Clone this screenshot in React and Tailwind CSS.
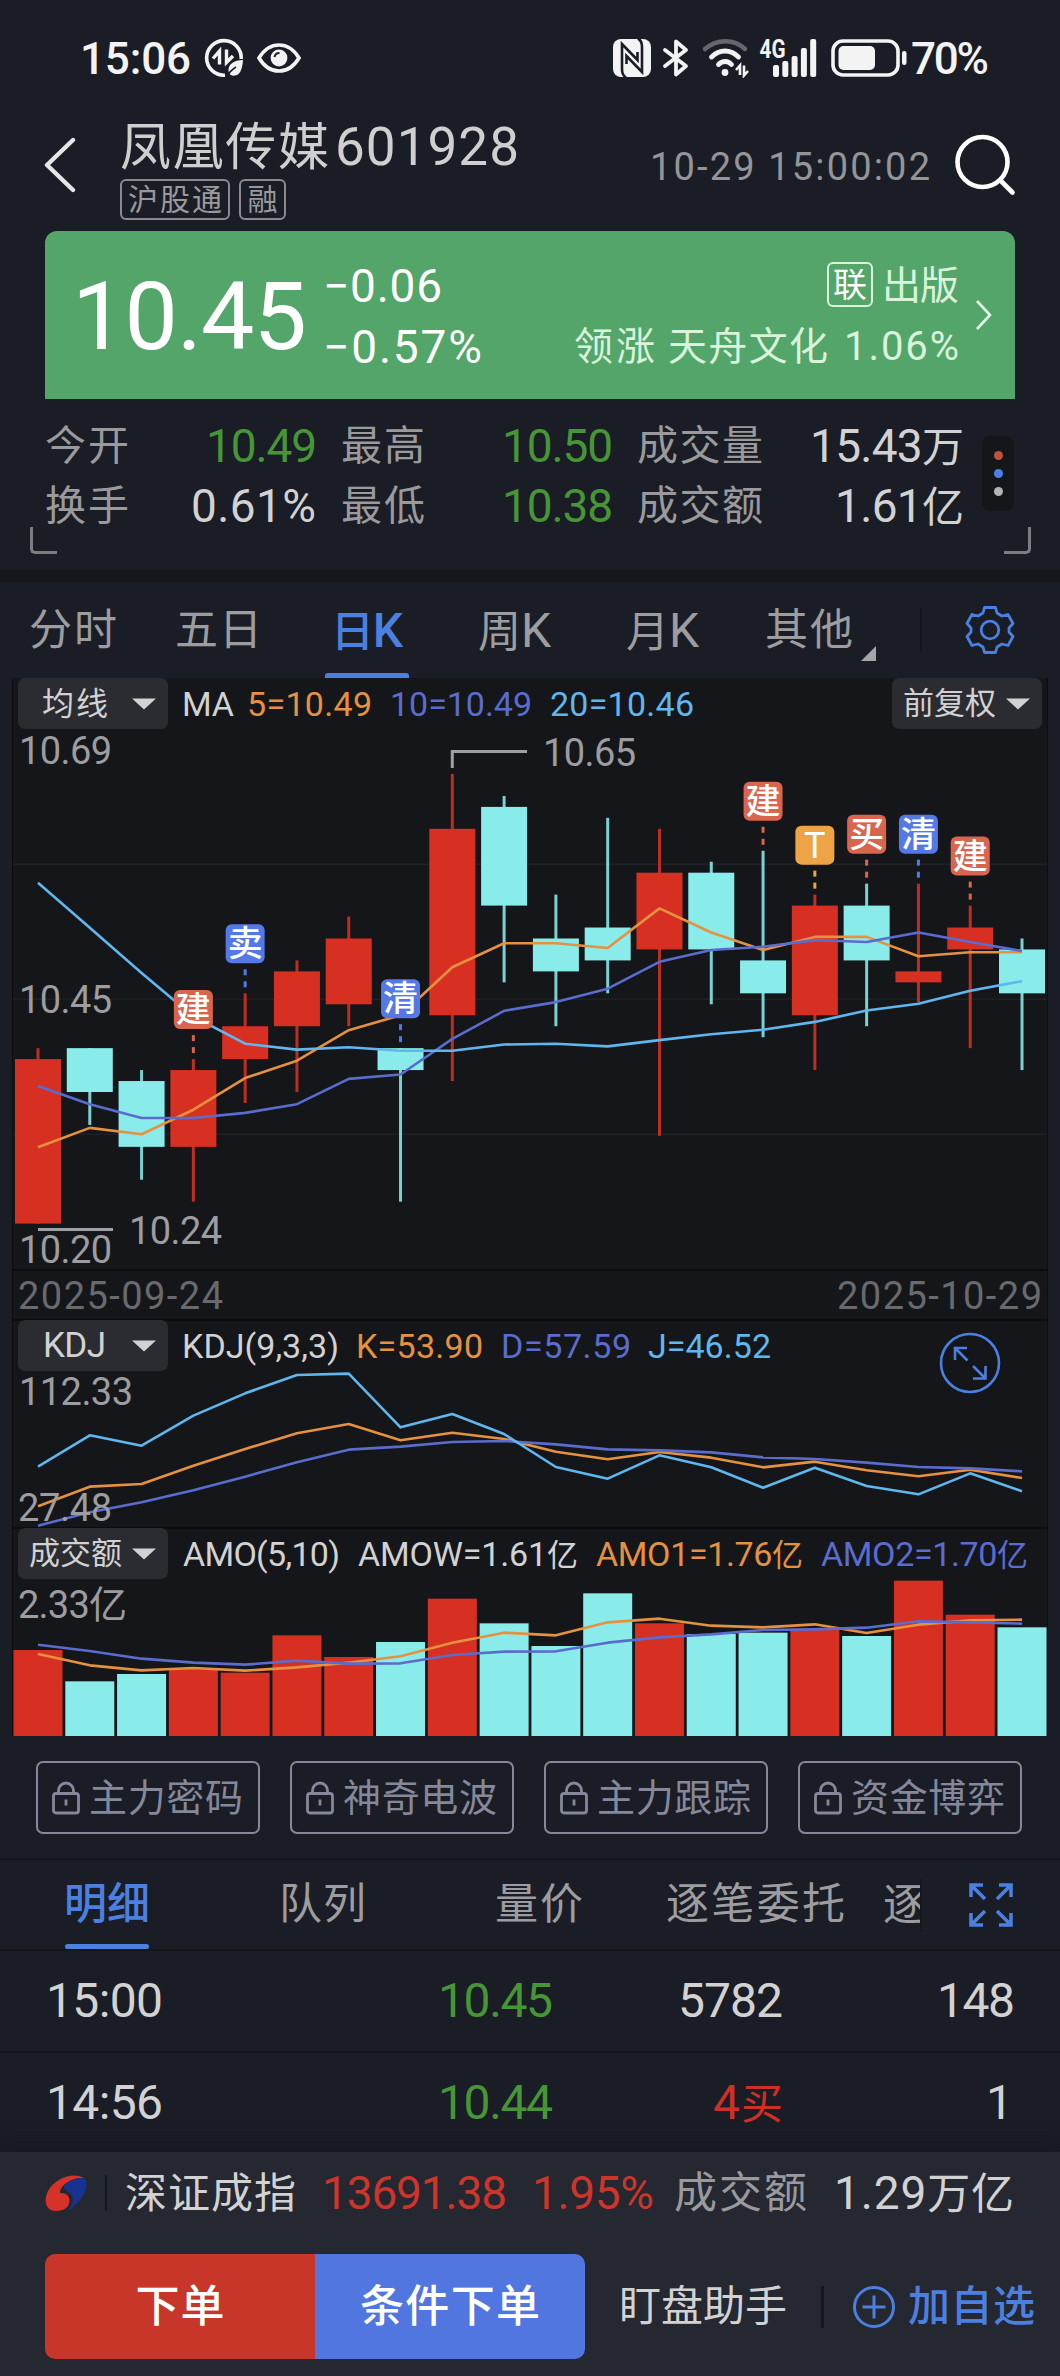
import React, { useLayoutEffect, useRef } from "react";

/* Text spread evenly over the width of its own box. */
function Fit({ className = "", children }) {
  const box = useRef(null);
  const inner = useRef(null);
  useLayoutEffect(() => {
    const span = inner.current;
    span.style.letterSpacing = "0px";
    const n = Math.max(1, span.textContent.length - 1);
    const room = box.current.clientWidth - span.getBoundingClientRect().width;
    span.style.letterSpacing = `${room / n}px`;
  }, [children]);
  return (
    <div ref={box} className={`shrink-0 whitespace-nowrap leading-none ${className}`}>
      <span ref={inner}>{children}</span>
    </div>
  );
}

const RED = "#d73022";
const CYAN = "#8aecea";
const ORANGE = "#e6913f";
const PURPLE = "#5a6cce";
const SKY = "#5fb7ee";

const X = (i) => 38 + i * 51.79;
const Y = (p) => 774 + (10.65 - p) * 1096.6;

/* high, body top, body bottom, low, rising */
const candles = [
  [10.4, 10.39, 10.24, 10.24, 1],
  [10.4, 10.4, 10.36, 10.33, 0],
  [10.38, 10.37, 10.31, 10.28, 0],
  [10.39, 10.38, 10.31, 10.26, 1],
  [10.45, 10.42, 10.39, 10.35, 1],
  [10.48, 10.47, 10.42, 10.36, 1],
  [10.52, 10.5, 10.44, 10.42, 1],
  [10.4, 10.4, 10.38, 10.26, 0],
  [10.65, 10.6, 10.43, 10.37, 1],
  [10.63, 10.62, 10.53, 10.46, 0],
  [10.54, 10.5, 10.47, 10.42, 0],
  [10.61, 10.51, 10.48, 10.45, 0],
  [10.6, 10.56, 10.49, 10.32, 1],
  [10.57, 10.56, 10.49, 10.44, 0],
  [10.58, 10.48, 10.45, 10.41, 0],
  [10.54, 10.53, 10.43, 10.38, 1],
  [10.55, 10.53, 10.48, 10.42, 0],
  [10.55, 10.47, 10.46, 10.442, 1],
  [10.53, 10.51, 10.49, 10.4, 1],
  [10.5, 10.49, 10.45, 10.38, 0],
];

const ma5 = [1147.3, 1127.9, 1134.2, 1109.7, 1078.1, 1060.7, 1030.2, 1015.2, 967.3, 943.2, 943.2, 948, 908.4, 932.5, 950, 936.9, 936.9, 956.3, 952.3, 952.3];
const ma10 = [1086, 1104.2, 1118, 1118, 1112.9, 1104.2, 1078.9, 1074.5, 1038.9, 1010.8, 1002.1, 988.7, 961.8, 950, 946.8, 940.1, 942, 932.5, 942, 951.1];
const ma20 = [882.7, 927.8, 972.9, 1016.5, 1043.7, 1049.6, 1047.2, 1050.8, 1050.8, 1044.5, 1043.7, 1046.4, 1040.1, 1034.2, 1029.8, 1021.9, 1010.5, 1003.7, 990.7, 981.2];

const badges = [
  [3, "建", "#d9654f", 10.39],
  [4, "卖", "#5478e6", 10.45],
  [7, "清", "#5478e6", 10.4],
  [14, "建", "#d9654f", 10.58],
  [15, "T", "#eea446", 10.54],
  [16, "买", "#d9654f", 10.55],
  [17, "清", "#5478e6", 10.55],
  [18, "建", "#d9654f", 10.53],
];

const kdj = {
  d: [797, 757, 727, 691, 650, 607, 569, 560, 546, 543, 553, 568, 571, 577, 592, 597, 608, 621, 625, 634],
  k: [739, 680, 672, 617, 567, 520, 492, 541, 518, 537, 575, 598, 576, 593, 622, 605, 631, 649, 629, 654],
  j: [620, 526, 557, 467, 400, 345, 341, 502, 462, 522, 621, 656, 586, 622, 683, 623, 678, 703, 640, 694],
};

const amoTop = [390, 484, 462, 445, 458, 346, 411, 366, 236, 310, 378, 220, 310, 342, 338, 326, 348, 182, 284, 322];
const amoUp = [1, 0, 0, 1, 1, 1, 1, 0, 1, 0, 0, 0, 1, 0, 0, 1, 0, 1, 1, 0];
const amo1 = [402, 436, 451, 444, 452, 442, 428, 409, 368, 338, 346, 307, 296, 317, 322, 313, 339, 314, 301, 299];
const amo2 = [374, 393, 416, 428, 434, 422, 431, 430, 405, 395, 394, 368, 352, 343, 330, 328, 323, 304, 307, 311];

function Line({ data, color, map = (v) => v }) {
  return (
    <polyline
      points={data.map((v, i) => `${X(i)},${map(v)}`).join(" ")}
      fill="none"
      stroke={color}
      strokeWidth="2.6"
      strokeLinejoin="round"
    />
  );
}

function Label({ x, y, w, children }) {
  return (
    <text x={x} y={y} textLength={w} fontSize="38" fill="#9d9da0">
      {children}
    </text>
  );
}

function Chip({ className = "", textClass, children }) {
  return (
    <div className={`flex h-[51px] w-[150px] shrink-0 items-center rounded-[7px] bg-[#2b2c31] text-[#d2d2d3] ${className}`}>
      <Fit className={textClass}>{children}</Fit>
      <svg className="ml-auto mr-[12px] h-[12px] w-[24px]" viewBox="0 0 24 12">
        <path d="M0 0.5H24L12 11.5Z" fill="#d2d2d3" />
      </svg>
    </div>
  );
}

function StatusBar() {
  return (
    <div className="flex h-[116px] items-center font-medium text-[#f3f3f4]">
      <Fit className="ml-[80px] mt-[2px] w-[111px] text-[44px]">15:06</Fit>
      <svg className="ml-[13px] h-[40px] w-[40px]" viewBox="0 0 40 40" fill="none" stroke="#f3f3f4">
        <path d="M37.2 21A17.3 17.3 0 1 0 21 37.2" strokeWidth="3.6" />
        <path d="M9 20.500L15.500 13V26.500" strokeWidth="3.400" />
        <path d="M22.500 11.500V24.500L29 18" strokeWidth="3.400" />
        <path d="M39 22c-9 0-15 4-14.500 11 0.500 5 6 6 10 3 3-3 4-8 4.500-14Z" fill="#f3f3f4" stroke="none" />
        <path d="M23 38.500c2-4 5-7 9-9.500" stroke="#1a1d25" strokeWidth="1.500" />
      </svg>
      <svg className="ml-[12px] h-[32px] w-[46px]" viewBox="0 0 46 32">
        <path d="M3 16C9 6 16 3 23 3s14 3 20 13C37 26 30 29 23 29S9 26 3 16Z" fill="none" stroke="#f3f3f4" strokeWidth="3.600" />
        <circle cx="23" cy="16" r="8.400" fill="#f3f3f4" />
        <path d="M18.500 15a5 5 0 0 1 5-4" fill="none" stroke="#1a1d25" strokeWidth="2" />
      </svg>

      <svg className="ml-[310px] h-[40px] w-[40px]" viewBox="0 0 40 40">
        <rect x="1" y="1" width="38" height="38" rx="8" fill="#f3f3f4" />
        <path d="M14 39.500C10.500 37.500 10 35 10 31V6L25.500 22V14" fill="none" stroke="#1a1d25" strokeWidth="2.600" />
        <path d="M26 0.500C29.500 2.500 30 5 30 9V34L14.500 18V26" fill="none" stroke="#1a1d25" strokeWidth="2.600" />
      </svg>
      <svg className="ml-[10px] h-[40px] w-[28px]" viewBox="0 0 28 40" fill="none" stroke="#f3f3f4" strokeWidth="3.800" strokeLinejoin="round" strokeLinecap="round">
        <path d="M3 12L24 28L14 36.500V3.500L24 12L3 28" />
      </svg>
      <svg className="ml-[11px] h-[40px] w-[50px]" viewBox="0 0 50 40" fill="none" strokeLinecap="round">
        <path d="M4 11C16 .500 33 .500 44 11" stroke="#66676c" strokeWidth="4.500" />
        <path d="M10.500 19c8-8 19-8 27 0" stroke="#f3f3f4" strokeWidth="4.800" />
        <path d="M17.500 26.500c4-4 9.500-4 13 0" stroke="#f3f3f4" strokeWidth="4.800" />
        <circle cx="24" cy="34.500" r="3.400" fill="#f3f3f4" />
        <path d="M35 32l4-4.500V37M43 27.500V37.500l4-4.500" stroke="#f3f3f4" strokeWidth="2.600" strokeLinecap="butt" />
      </svg>
      <svg className="ml-[8px] h-[40px] w-[60px] overflow-visible" viewBox="0 0 60 40">
        <text x="0.500" y="19.500" fontSize="25" fontWeight="700" textLength="26" lengthAdjust="spacingAndGlyphs" fill="#f3f3f4">4G</text>
        {[[14, 27], [23.3, 23], [32.6, 18], [41.9, 10], [51.2, 1]].map(([x, y]) => (
          <rect key={x} x={x} y={y} width="6" height={39 - y} rx="2" fill="#f3f3f4" />
        ))}
      </svg>
      <svg className="ml-[10px] h-[40px] w-[80px]" viewBox="0 0 80 40">
        <rect x="4" y="3" width="65" height="34" rx="10" fill="none" stroke="#f3f3f4" strokeWidth="3.600" />
        <rect x="9.500" y="8" width="36.500" height="24" rx="5" fill="#f3f3f4" />
        <rect x="73" y="13" width="4.500" height="14" rx="2.200" fill="#f3f3f4" />
      </svg>
      <Fit className="ml-[2px] mt-[2px] w-[78px] text-[44px]">70%</Fit>
    </div>
  );
}

function Header() {
  return (
    <div className="flex h-[115px] items-start">
      <svg className="ml-[44px] mt-[21px] h-[56px] w-[32px]" viewBox="0 0 32 56" fill="none" stroke="#e6e6e7" strokeWidth="4.400" strokeLinecap="round" strokeLinejoin="round">
        <path d="M29 3L3 28L29 53" />
      </svg>
      <div className="ml-[44px] w-[400px]">
        <div className="flex h-[63px] items-center text-[#cfcfd0]">
          <Fit className="w-[209px] text-[51px]">凤凰传媒</Fit>
          <Fit className="ml-[6px] w-[184px] text-[53px]">601928</Fit>
        </div>
        <div className="flex gap-[9px] text-[30px] text-[#9a9a9d]">
          <div className="flex h-[41px] w-[110px] items-center justify-center rounded-[6px] border-2 border-[#8b8b8f]">
            <Fit className="w-[94px]">沪股通</Fit>
          </div>
          <div className="flex h-[41px] w-[47px] items-center justify-center rounded-[6px] border-2 border-[#8b8b8f]">
            <Fit className="w-[30px]">融</Fit>
          </div>
        </div>
      </div>
      <Fit className="ml-[130px] mt-[32px] w-[280px] text-[38px] text-[#949598]">10-29 15:00:02</Fit>
      <svg className="ml-[24px] mt-[17px] h-[64px] w-[64px]" viewBox="0 0 64 64" fill="none" stroke="#fff" strokeWidth="4.600" strokeLinecap="round">
        <circle cx="28.500" cy="29" r="25" />
        <path d="M46.500 47.500L58.500 59.500" />
      </svg>
    </div>
  );
}

function PriceCard() {
  return (
    <div className="mx-[45px] flex h-[168px] items-center rounded-t-[12px] bg-[#53a569] text-white">
      <Fit className="ml-[27px] w-[235px] pt-[2px] text-[95px]">10.45</Fit>
      <div className="ml-[16px] text-[46px]">
        <div className="flex h-[61px] items-center pt-[2px]"><Fit className="w-[119px]">−0.06</Fit></div>
        <div className="flex h-[61px] items-center pt-[2px]"><Fit className="w-[159px]">−0.57%</Fit></div>
      </div>
      <div className="ml-auto flex flex-col items-end text-[39px] text-[#d9f3dd]">
        <div className="flex h-[61px] items-center">
          <div className="flex h-[45px] w-[46px] items-center justify-center rounded-[6px] border-2 border-[#d9f3dd] text-[34px] leading-none text-white">联</div>
          <Fit className="ml-[9px] w-[77px] pt-[3px]">出版</Fit>
        </div>
        <div className="flex h-[61px] items-center pt-[3px]">
          <Fit className="w-[81px]">领涨</Fit>
          <Fit className="ml-[13px] w-[160px]">天舟文化</Fit>
          <Fit className="ml-[16px] w-[115px] text-[40px]">1.06%</Fit>
        </div>
      </div>
      <svg className="ml-[16px] mr-[22px] h-[32px] w-[18px]" viewBox="0 0 18 32" fill="none" stroke="#e5f8e8" strokeWidth="2.600">
        <path d="M2 2L15 16L2 30" />
      </svg>
    </div>
  );
}

function Stats() {
  return (
    <div className="relative flex h-[171px] items-start pl-[45px] pt-[17px] text-[46px] text-[#d2d2d3]">
      <div className="w-[273px]">
        <div className="flex h-[60px] items-center justify-between">
          <Fit className="w-[84px] text-[41px] text-[#9a9a9d]">今开</Fit>
          <Fit className="mr-px w-[111px] text-[#479636]">10.49</Fit>
        </div>
        <div className="flex h-[60px] items-center justify-between">
          <Fit className="w-[84px] text-[41px] text-[#9a9a9d]">换手</Fit>
          <Fit className="mr-[2px] w-[125px]">0.61%</Fit>
        </div>
      </div>
      <div className="ml-[23px] w-[273px]">
        <div className="flex h-[60px] items-center justify-between">
          <Fit className="w-[84px] text-[41px] text-[#9a9a9d]">最高</Fit>
          <Fit className="mr-px w-[111px] text-[#479636]">10.50</Fit>
        </div>
        <div className="flex h-[60px] items-center justify-between">
          <Fit className="w-[84px] text-[41px] text-[#9a9a9d]">最低</Fit>
          <Fit className="mr-px w-[111px] text-[#479636]">10.38</Fit>
        </div>
      </div>
      <div className="ml-[23px] w-[327px]">
        <div className="flex h-[60px] items-center justify-between">
          <Fit className="w-[126px] text-[41px] text-[#9a9a9d]">成交量</Fit>
          <Fit className="w-[154px]">15.43<span className="text-[42px]">万</span></Fit>
        </div>
        <div className="flex h-[60px] items-center justify-between">
          <Fit className="w-[126px] text-[41px] text-[#9a9a9d]">成交额</Fit>
          <Fit className="w-[129px]">1.61<span className="text-[42px]">亿</span></Fit>
        </div>
      </div>
      <div className="ml-[18px] mt-[20px] flex h-[75px] w-[32px] flex-col items-center justify-center gap-[9px] rounded-[8px] bg-[#14161a]">
        <div className="h-[9px] w-[9px] rounded-full bg-[#c0503c]" />
        <div className="h-[9px] w-[9px] rounded-full bg-[#4b80e4]" />
        <div className="h-[9px] w-[9px] rounded-full bg-[#b4b4b6]" />
      </div>
      <div className="absolute bottom-[16px] left-[30px] h-[27px] w-[27px] rounded-bl-[5px] border-b-[3px] border-l-[3px] border-[#7c7d81]" />
      <div className="absolute bottom-[16px] right-[29px] h-[27px] w-[27px] rounded-br-[5px] border-b-[3px] border-r-[3px] border-[#7c7d81]" />
    </div>
  );
}

function PeriodTabs() {
  return (
    <div className="flex h-[96px] items-center text-[43px] text-[#9d9da0]">
      <Fit className="ml-[29px] w-[88px] pt-px">分时</Fit>
      <Fit className="ml-[58px] w-[87px] pt-px">五日</Fit>
      <div className="ml-[63px] flex h-full w-[84px] flex-col items-center justify-end text-[#4b80e0]">
        <div className="flex flex-1 items-center pt-[6px]">
          <Fit className="w-[72px] font-medium">日<span className="text-[48px]">K</span></Fit>
        </div>
        <div className="h-[5px] w-full rounded-t-[3px] bg-[#4b80e0]" />
      </div>
      <Fit className="ml-[69px] w-[73px] pt-px">周<span className="text-[48px]">K</span></Fit>
      <Fit className="ml-[75px] w-[73px] pt-px">月<span className="text-[48px]">K</span></Fit>
      <Fit className="ml-[66px] w-[88px] pt-px">其他</Fit>
      <svg className="ml-[8px] mt-[46px] h-[15px] w-[15px]" viewBox="0 0 15 15">
        <path d="M15 0V15H0Z" fill="#a5a5a7" />
      </svg>
      <div className="ml-[44px] h-[44px] w-[2px] bg-[#14161a]" />
      <svg className="ml-[43px] h-[50px] w-[50px]" viewBox="0 0 50 50" fill="none" stroke="#4b80e0" strokeWidth="2.800" strokeLinejoin="round">
        <path d="M19.500 2.500h11l1.500 5.500 5 3 6-1.500 5 9-4 4.500v4l4 4.500-5 9-6-1.500-5 3-1.500 5.500h-11l-1.500-5.500-5-3-6 1.500-5-9 4-4.500v-4l-4-4.500 5-9 6 1.500 5-3z" />
        <circle cx="25" cy="25" r="8.800" />
      </svg>
    </div>
  );
}

function MainChart() {
  return (
    <div className="h-[591px]">
      <div className="flex items-center pl-[5px] text-[34px]">
        <Chip textClass="ml-[24px] w-[66px] text-[32px]">均线</Chip>
        <Fit className="ml-[14px] w-[52px] text-[#d2d2d3]">MA</Fit>
        <Fit className="ml-[13px] w-[125px] text-[#e6913f]">5=10.49</Fit>
        <Fit className="ml-[18px] w-[142px] text-[#5a6cce]">10=10.49</Fit>
        <Fit className="ml-[18px] w-[144px] text-[#5fb7ee]">20=10.46</Fit>
        <Chip className="ml-auto mr-[5px]" textClass="ml-[11px] w-[93px] text-[31px]">前复权</Chip>
      </div>
      <svg className="block h-[540px] w-full overflow-visible" viewBox="13 729 1034 540">
        {[864, 999, 1134].map((y) => (
          <rect key={y} x="13" y={y - 0.5} width="1034" height="1.500" fill="#1e2025" />
        ))}
        {candles.map(([h, t, b, l, up], i) => (
          <g key={i} fill={up ? RED : CYAN}>
            <rect x={X(i) - 1.5} y={Y(h)} width="3" height={Y(l) - Y(h)} opacity="0.880" />
            <rect x={X(i) - 23} y={Y(t)} width="46" height={Y(b) - Y(t)} />
          </g>
        ))}
        <Line data={ma5} color={ORANGE} />
        <Line data={ma10} color={PURPLE} />
        <Line data={ma20} color={SKY} />
        {badges.map(([i, t, c, h]) => {
          const top = Y(h) - 69;
          return (
            <g key={i}>
              <rect x={X(i) - 19.5} y={top} width="39" height="39" rx="6" fill={c} />
              <text
                x={X(i)}
                y={top + 32}
                fontSize={t === "T" ? 36 : 35}
                fontWeight={t === "T" ? 400 : 500}
                textAnchor="middle"
                fill="#fff"
              >
                {t}
              </text>
              <rect x={X(i) - 1.5} y={top + 45} width="3" height="6" fill={c} />
              <rect x={X(i) - 1.5} y={top + 57} width="3" height="6" fill={c} />
            </g>
          );
        })}
        <path d="M452.300 768V751.500H527" fill="none" stroke="#a0a0a3" strokeWidth="3" />
        <path d="M38 1229.500H113" stroke="#a0a0a3" strokeWidth="3" />
        <Label x="19" y="764" w="93">10.69</Label>
        <Label x="543" y="766" w="93">10.65</Label>
        <Label x="19" y="1013" w="93">10.45</Label>
        <Label x="19" y="1263" w="93">10.20</Label>
        <Label x="129" y="1244" w="93">10.24</Label>
      </svg>
    </div>
  );
}

function KdjChart() {
  const map = (v) => v / 3 + 1260;
  return (
    <div className="relative h-[208px] border-t-2 border-[#0c0d10]">
      <div className="-mt-px flex items-center pl-[5px] text-[34px]">
        <Chip textClass="ml-[25px] w-[63px] text-[35px]">KDJ</Chip>
        <Fit className="ml-[14px] w-[157px] text-[#d2d2d3]">KDJ(9,3,3)</Fit>
        <Fit className="ml-[17px] w-[127px] text-[#e6913f]">K=53.90</Fit>
        <Fit className="ml-[18px] w-[130px] text-[#5a6cce]">D=57.59</Fit>
        <Fit className="ml-[17px] w-[123px] text-[#5fb7ee]">J=46.52</Fit>
      </div>
      <svg className="block h-[156px] w-full overflow-visible" viewBox="13 1371 1034 156">
        <Line data={kdj.k} color={ORANGE} map={map} />
        <Line data={kdj.d} color={PURPLE} map={map} />
        <Line data={kdj.j} color={SKY} map={map} />
        <Label x="19" y="1405" w="114">112.33</Label>
        <Label x="18" y="1521" w="94">27.48</Label>
      </svg>
      <svg className="absolute right-[46px] top-[11px] h-[62px] w-[62px]" viewBox="0 0 62 62" fill="none" stroke="#4b80e0" strokeWidth="2.600">
        <circle cx="31" cy="31" r="29" />
        <path d="M16 28V16H28M16 16L28.500 28.500M34 34L46.500 46.500M46.500 34V46.500H34" />
      </svg>
    </div>
  );
}

function AmoChart() {
  const map = (v) => v / 3 + 1520;
  return (
    <div className="h-[208px] border-t-2 border-[#0c0d10]">
      <div className="-mt-px flex items-center pl-[5px] text-[34px]">
        <Chip textClass="ml-[11px] w-[93px] text-[31px]">成交额</Chip>
        <Fit className="ml-[15px] w-[157px] text-[#d2d2d3]">AMO(5,10)</Fit>
        <Fit className="ml-[18px] w-[220px] text-[#d2d2d3]">AMOW=1.61<span className="text-[31px]">亿</span></Fit>
        <Fit className="ml-[18px] w-[207px] text-[#e6913f]">AMO1=1.76<span className="text-[31px]">亿</span></Fit>
        <Fit className="ml-[18px] w-[207px] text-[#5a6cce]">AMO2=1.70<span className="text-[31px]">亿</span></Fit>
      </div>
      <svg className="block h-[157px] w-full" viewBox="13 1579 1034 157">
        {amoTop.map((t, i) => (
          <rect key={i} x={X(i) - 24.5} y={map(t)} width="49" height={1736 - map(t)} fill={amoUp[i] ? RED : CYAN} />
        ))}
        <Line data={amo1} color={ORANGE} map={map} />
        <Line data={amo2} color={PURPLE} map={map} />
        <Label x="18" y="1618" w="109">2.33亿</Label>
      </svg>
    </div>
  );
}

function Locked({ children }) {
  return (
    <div className="flex h-[73px] w-[224px] items-center rounded-[7px] border-2 border-[#84889a] pl-[14px]">
      <svg className="h-[34px] w-[28px]" viewBox="0 0 28 34" fill="none" stroke="#84889a" strokeWidth="2.800">
        <rect x="1.500" y="12.500" width="25" height="19.500" rx="2.500" />
        <path d="M6.500 12V9.500a7.500 7.500 0 0 1 15 0V12M14 18.500v6" />
      </svg>
      <Fit className="ml-[9px] w-[154px] pt-px text-[38px] text-[#84889a]">{children}</Fit>
    </div>
  );
}

function DetailTabs() {
  return (
    <div className="flex h-[91px] items-center border-b-2 border-[#14161a] text-[43px] text-[#9d9da0]">
      <div className="ml-[65px] flex h-full w-[84px] flex-col text-[#4b80e0]">
        <div className="flex flex-1 items-center pt-[5px]">
          <Fit className="-ml-px w-[86px] font-medium">明细</Fit>
        </div>
        <div className="h-[5px] rounded-[3px] bg-[#4b80e0]" />
      </div>
      <Fit className="ml-[130px] w-[87px]">队列</Fit>
      <Fit className="ml-[129px] w-[88px]">量价</Fit>
      <Fit className="ml-[83px] w-[179px]">逐笔委托</Fit>
      <div className="ml-[38px] w-[38px] overflow-hidden border-r border-[#14161a] leading-[54px]">逐</div>
      <svg className="ml-[48px] h-[44px] w-[44px]" viewBox="0 0 44 44" fill="none" stroke="#4b80e0" strokeWidth="3.600">
        <path d="M2 14V2H14M2 2L16 16M30 2H42V14M42 2L28 16M2 30V42H14M2 42L16 28M30 42H42V30M42 42L28 28" />
      </svg>
    </div>
  );
}

function TradeRow({ time, price, className, volume, count }) {
  return (
    <div className={`flex items-center text-[48px] text-[#d2d2d3] ${className}`}>
      <Fit className="ml-[46px] w-[117px]">{time}</Fit>
      <Fit className="ml-[275px] w-[115px] text-[#479636]">{price}</Fit>
      <div className="flex w-[230px] justify-end">{volume}</div>
      <div className="flex w-[232px] justify-end">{count}</div>
    </div>
  );
}

function BottomBar() {
  return (
    <div className="h-[225px] bg-[#252731] shadow-[0_-8px_16px_rgba(20,22,26,0.5)]">
      <div className="flex h-[82px] items-center text-[46px] text-[#d2d2d3]">
        <svg className="ml-[44px] h-[38px] w-[43px]" viewBox="0 0 43 38">
          <path d="M40 4C30-2 12 3 4 17c-5 10-2 20 8 20 9 0 15-5 13-13-1-4-5-5-9-5 0-8 12-16 24-15Z" fill="#d63228" />
          <path d="M20 12C27 4 39 2 42 6c3 8-5 24-19 31 5-5 7-10 5-15-1-5-8-4-8-10Z" fill="#17338f" />
        </svg>
        <div className="ml-[18px] h-[36px] w-[2px] bg-[#14161a]" />
        <Fit className="ml-[18px] w-[171px] pt-px text-[42px]">深证成指</Fit>
        <Fit className="ml-[26px] w-[185px] text-[#cb352b]">13691.38</Fit>
        <Fit className="ml-[25px] w-[122px] text-[#cb352b]">1.95%</Fit>
        <Fit className="ml-[20px] w-[133px] pt-px text-[43px] text-[#9a9a9d]">成交额</Fit>
        <Fit className="ml-[27px] w-[180px]">1.29<span className="text-[43px]">万亿</span></Fit>
      </div>
      <div className="ml-[45px] mt-[20px] flex h-[105px] items-center text-[42px]">
        <div className="flex h-full w-[270px] items-center justify-center rounded-l-[10px] bg-[#c83529] font-medium text-white">
          <Fit className="w-[89px] pt-px text-[44px]">下单</Fit>
        </div>
        <div className="flex h-full w-[270px] items-center justify-center rounded-r-[10px] bg-[#5276e0] font-medium text-white">
          <Fit className="w-[180px] pt-px text-[44px]">条件下单</Fit>
        </div>
        <Fit className="ml-[34px] w-[168px] pt-px text-[#d2d2d3]">盯盘助手</Fit>
        <div className="ml-[34px] h-[42px] w-[3px] bg-[#15171c]" />
        <svg className="ml-[28px] h-[44px] w-[44px]" viewBox="0 0 44 44" fill="none" stroke="#4b80e0" strokeWidth="3">
          <circle cx="22" cy="22" r="19.500" />
          <path d="M22 10.500V33.500M10.500 22H33.500" />
        </svg>
        <Fit className="ml-[12px] w-[127px] pt-px font-medium text-[#4b80e0]">加自选</Fit>
      </div>
    </div>
  );
}

export default function App() {
  return (
    <div className="h-[2376px] w-[1060px] overflow-hidden bg-[#1a1d25] font-[Roboto,'Noto_Sans_CJK_SC',sans-serif]">
      <StatusBar />
      <Header />
      <PriceCard />
      <Stats />
      <div className="h-[12px] bg-[#14161a]" />
      <PeriodTabs />
      <div className="mx-[12px] h-[1058px] border-x border-[#0c0d10] bg-[#14161a]">
        <MainChart />
        <div className="flex h-[50px] items-center justify-between border-t-2 border-[#0c0d10] px-[5px] pt-px text-[38px] text-[#696a6d]">
          <Fit className="w-[205px]">2025-09-24</Fit>
          <Fit className="w-[205px]">2025-10-29</Fit>
        </div>
        <KdjChart />
        <AmoChart />
      </div>
      <div className="mt-[25px] flex gap-[30px] px-[36px]">
        {["主力密码", "神奇电波", "主力跟踪", "资金博弈"].map((t) => (
          <Locked key={t}>{t}</Locked>
        ))}
      </div>
      <div className="mt-[24px] h-[2px] bg-[#14161a]" />
      <DetailTabs />
      <TradeRow
        className="h-[102px] border-b-2 border-[#14161a]"
        time="15:00"
        price="10.45"
        volume={<Fit className="w-[105px]">5782</Fit>}
        count={<Fit className="w-[78px]">148</Fit>}
      />
      <TradeRow
        className="h-[99px]"
        time="14:56"
        price="10.44"
        volume={<Fit className="w-[70px] text-[#d02f25]">4<span className="text-[42px]">买</span></Fit>}
        count={<div className="mr-[2px] leading-none">1</div>}
      />
      <BottomBar />
    </div>
  );
}
